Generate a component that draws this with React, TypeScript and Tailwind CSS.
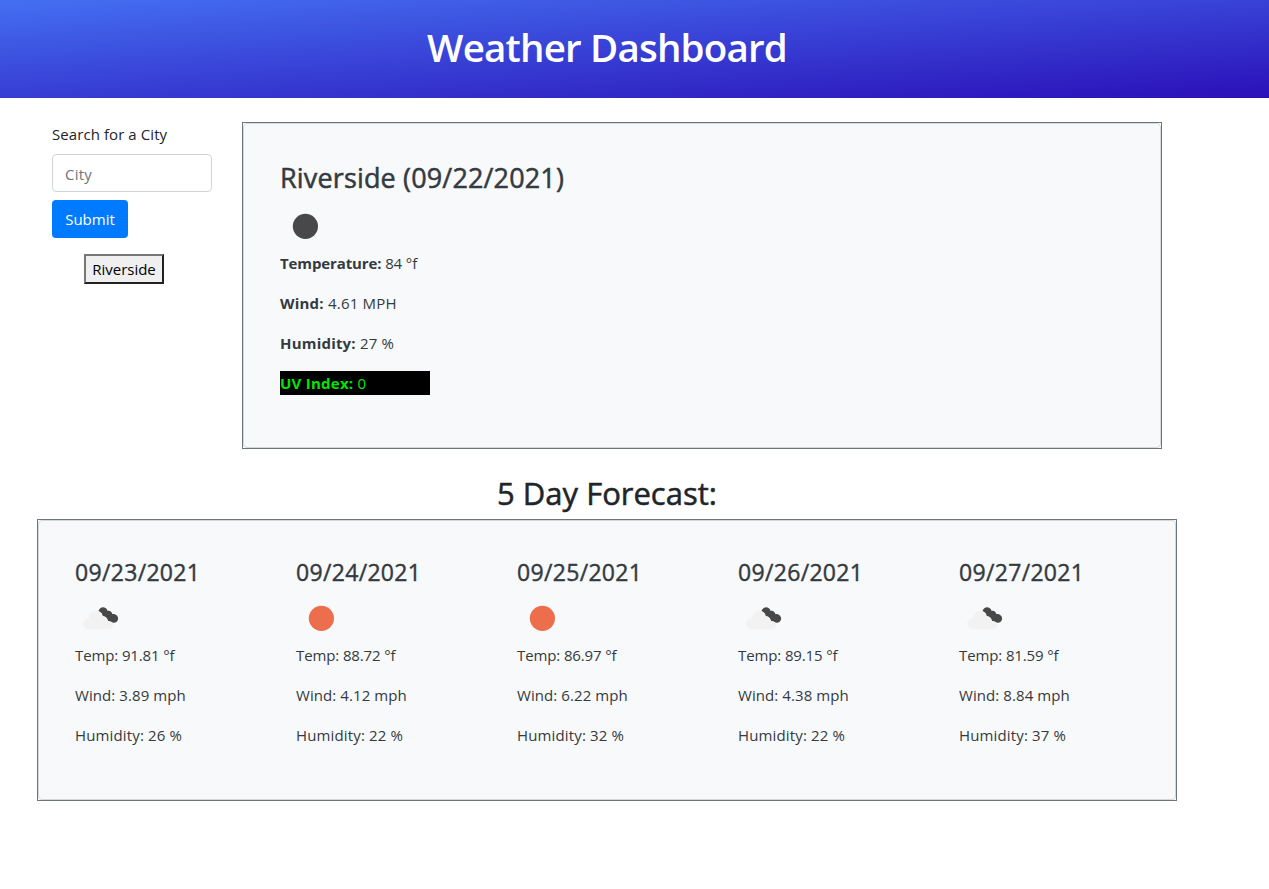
import React from "react";

type Day = { date: string; icon: "cloud" | "sun"; temp: string; wind: string; humidity: string };

const days: Day[] = [
  { date: "09/23/2021", icon: "cloud", temp: "91.81", wind: "3.89", humidity: "26" },
  { date: "09/24/2021", icon: "sun", temp: "88.72", wind: "4.12", humidity: "22" },
  { date: "09/25/2021", icon: "sun", temp: "86.97", wind: "6.22", humidity: "32" },
  { date: "09/26/2021", icon: "cloud", temp: "89.15", wind: "4.38", humidity: "22" },
  { date: "09/27/2021", icon: "cloud", temp: "81.59", wind: "8.84", humidity: "37" },
];

function Disc({ color }: { color: string }) {
  return (
    <svg width="50" height="50" viewBox="0 0 50 50" className="block">
      <circle cx="25.4" cy="25.3" r="12.6" fill={color} />
    </svg>
  );
}

function Clouds() {
  return (
    <svg width="50" height="50" viewBox="0 0 50 50" className="block">
      <path
        d="M23.5 18C24.5 14.8 28 13.3 30.8 15.2C31.8 15.9 32.4 17 32.6 18C34.8 17.3 36.9 18.7 37.3 21C40.5 20.7 43.4 22.8 43.1 26C42.8 29.5 38.7 31 36 28.8C34.5 29 32.9 28.3 32.2 26.5C31.5 24.7 29.8 23.4 27.8 23.2L26.8 20.3Z"
        fill="#484849"
      />
      <path
        d="M14 36.2C10.8 36.2 8.2 33.9 8.2 30.8C8.2 27.8 10.5 25.5 13.7 25.4C14.2 20.6 17.5 17.7 21.2 17.7C24.2 17.7 26.4 19.5 27.5 22.9C30.5 22.8 32.6 25 33 27.9C35.9 27.9 38.3 29.5 38.3 32C38.3 34.6 36.2 36.2 33.6 36.2Z"
        fill="#f2f2f2"
      />
    </svg>
  );
}

function Panel({ className, children }: { className: string; children: React.ReactNode }) {
  return (
    <div className={`border border-[#6c757d] bg-white ${className}`}>
      <div className="h-full w-full rounded border border-[#d5d8db] bg-[#f8f9fa] text-[#343a40]">{children}</div>
    </div>
  );
}

export default function App() {
  return (
    <div className="min-h-[889px] bg-white font-['Open_Sans','Noto_Sans',sans-serif] text-[15px] leading-6 text-[#212529]">
      <header className="h-[98px] bg-[linear-gradient(176deg,#446ff2,#2b10b8)] pt-[23px]">
        <h1 className="w-[1214px] text-center text-[38.5px] leading-12 font-semibold tracking-[-0.8px] text-white">
          Weather Dashboard
        </h1>
      </header>

      <main className="ml-[37px] w-[1140px]">
        <div className="flex pt-6">
          <aside className="ml-[15px] w-[190px]">
            <label htmlFor="city" className="mb-2 block tracking-[0.08px]">Search for a City</label>
            <input
              id="city"
              placeholder="City"
              className="block h-[38px] w-40 rounded border border-[#ced4da] px-3 pt-0.5 tracking-[0.2px] outline-none placeholder:text-[#6c757d]"
            />
            <button className="mt-2 block h-[38px] w-[76px] rounded bg-[#007bff] text-white">Submit</button>
            <button className="mt-4 ml-8 block h-[30px] w-20 border-2 border-t-[#767676] border-r-[#212121] border-b-[#212121] border-l-[#767676] bg-[#efefef] text-black">
              Riverside
            </button>
          </aside>

          <Panel className="h-[327px] w-[920px]">
            <section className="px-9 pt-[37px]">
              <h2 className="mb-1.5 text-[27px] leading-[34px] tracking-[0.15px] whitespace-nowrap [-webkit-text-stroke:0.5px]">
                Riverside (09/22/2021)
              </h2>
              <Disc color="#48484a" />
              <p className="mb-4 tracking-[-0.12px]"><b>Temperature:</b> 84 °f</p>
              <p className="mb-4 tracking-[0.22px]"><b>Wind:</b> 4.61 MPH</p>
              <p className="mb-4 tracking-[0.2px]"><b>Humidity:</b> 27 %</p>
              <p className="w-[150px] bg-black tracking-[0.25px] text-[#00e600]"><b>UV Index:</b> 0</p>
            </section>
          </Panel>
        </div>

        <h2 className="mt-[26px] mb-2 text-center text-[31px] leading-9 [-webkit-text-stroke:0.5px]">5 Day Forecast:</h2>

        <Panel className="h-[282px] w-full">
          <div className="flex pt-[37px] pl-9">
            {days.map((d) => (
              <section key={d.date} className="w-[221px] shrink-0">
                <h3 className="mb-[7px] text-[23px] leading-7 tracking-[0.32px] [-webkit-text-stroke:0.4px]">{d.date}</h3>
                {d.icon === "sun" ? <Disc color="#ec6e4c" /> : <Clouds />}
                <p className="mb-4 tracking-[-0.12px]">Temp: {d.temp} °f</p>
                <p className="mb-4 tracking-[0.08px]">Wind: {d.wind} mph</p>
                <p className="tracking-[0.15px]">Humidity: {d.humidity} %</p>
              </section>
            ))}
          </div>
        </Panel>
      </main>
    </div>
  );
}
